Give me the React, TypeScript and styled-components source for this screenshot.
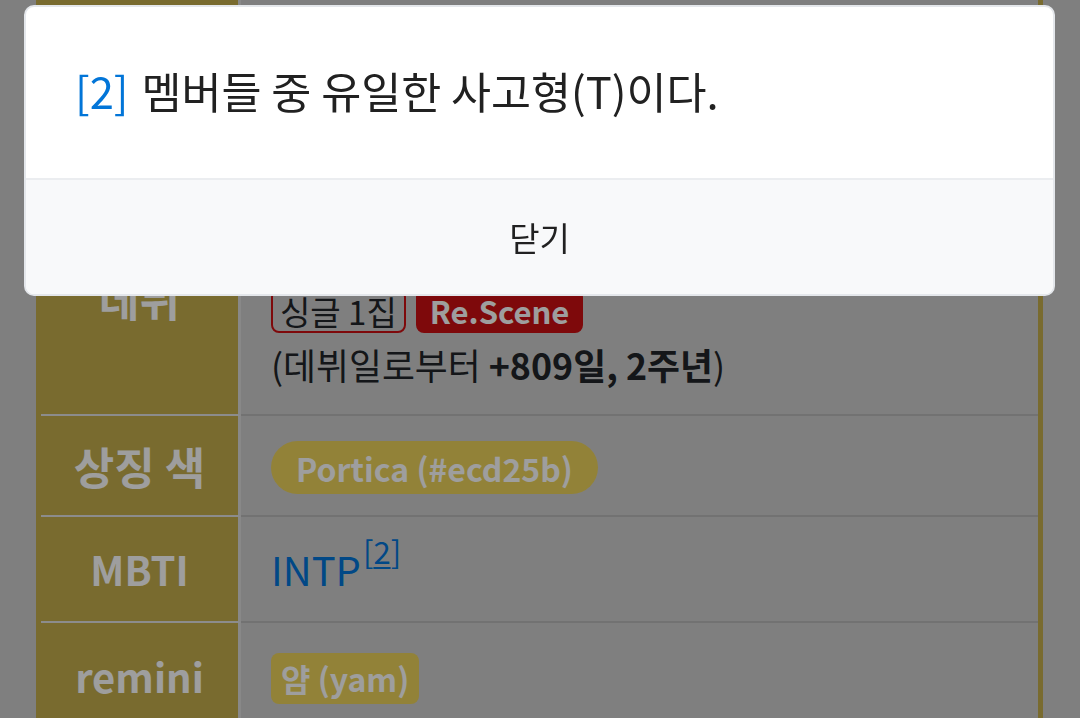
import React from "react";
import styled, { createGlobalStyle } from "styled-components";

const GOLD = "#c3ad4c";
const SYMBOL = "#ecd25b";
const RED = "#cb1013";
const LINK = "#0275d8";
const INK = "#212529";

const GlobalStyle = createGlobalStyle`
  html, body { margin: 0; padding: 0; }
  body {
    background: #cecece;
    font-family: "Noto Sans CJK KR", "Noto Sans", sans-serif;
    color: ${INK};
    overflow: hidden;
  }
`;

const Page = styled.main`
  height: 718px;
  overflow: hidden;
  padding-left: 36px;
`;

const InfoTable = styled.div`
  width: 1007px;
  box-sizing: border-box;
  border: 5px solid ${GOLD};
  border-top: 0;
`;

const Row = styled.div<{ $height: number }>`
  display: grid;
  grid-template-columns: 200px 1fr;
  height: ${(p) => p.$height}px;
`;

const Label = styled.div<{ $latin?: boolean }>`
  background: ${GOLD};
  border-bottom: 2px solid #e2e2e2;
  border-right: 3px solid #dcdcdc;
  display: flex;
  align-items: center;
  justify-content: center;
  color: #ffffff;
  font-size: ${(p) => (p.$latin ? 40 : 44)}px;
  font-weight: 700;
`;

const Cell = styled.div`
  border-bottom: 2px solid #b9b9b9;
  padding: 0 30px;
  display: flex;
  flex-direction: column;
  justify-content: center;
  align-items: flex-start;
  font-size: 35.8px;
  line-height: 46px;
`;

const TagLine = styled.div`
  display: flex;
  gap: 10px;
  margin: 34px 0 8px;
`;

const Tag = styled.span<{ $solid?: boolean }>`
  display: inline-flex;
  align-items: center;
  height: 44px;
  box-sizing: border-box;
  padding: 0 ${(p) => (p.$solid ? 12 : 7)}px;
  border-radius: 8px;
  border: 2px solid ${RED};
  background: ${(p) => (p.$solid ? RED : "transparent")};
  color: ${(p) => (p.$solid ? "#ffffff" : INK)};
  font-weight: ${(p) => (p.$solid ? 700 : 400)};
  font-size: ${(p) => (p.$solid ? 31 : 33)}px;
`;

const Strong = styled.b`
  font-weight: 700;
`;

const ColorPill = styled.span<{ $round?: boolean }>`
  display: inline-flex;
  align-items: center;
  background: ${SYMBOL};
  color: #ffffff;
  font-weight: 700;
  font-size: 32px;
  height: ${(p) => (p.$round ? 53 : 51)}px;
  padding: 0 ${(p) => (p.$round ? 25 : 10)}px;
  border-radius: ${(p) => (p.$round ? "27px" : "8px")};
  margin-top: 4px;
`;

const Link = styled.span`
  color: ${LINK};
  font-size: 40px;
  line-height: 50px;
`;

const Ref = styled.sup`
  color: ${LINK};
  font-size: 31px;
  line-height: 0;
  vertical-align: 22px;
  margin-left: 2px;

  u {
    text-decoration-thickness: 2px;
    text-underline-offset: 3px;
  }
`;

const Backdrop = styled.div`
  position: fixed;
  inset: 0;
  background: rgba(0, 0, 0, 0.38);
  z-index: 10;
`;

const Dialog = styled.div`
  position: fixed;
  top: 5px;
  left: 24px;
  width: 1031px;
  box-sizing: border-box;
  background: #ffffff;
  border: 2px solid #e4e7eb;
  border-radius: 10px;
  overflow: hidden;
  z-index: 11;
`;

const DialogBody = styled.div`
  height: 171px;
  box-sizing: border-box;
  padding: 0 0 5px 49px;
  display: flex;
  align-items: center;
  font-size: 43.5px;
  color: #212121;
`;

const Note = styled.span`
  color: ${LINK};
  margin-right: 13px;
`;

const DialogFooter = styled.div`
  height: 116px;
  box-sizing: border-box;
  border-top: 2px solid #ebedf0;
  background: #f8f9fa;
  display: flex;
  align-items: center;
  justify-content: center;
  font-size: 33px;
  color: #212121;
`;

export default function App() {
  return (
    <>
      <GlobalStyle />
      <Page>
        <InfoTable>
          {/* row scrolled mostly out of view, under the dialog */}
          <Row $height={182}>
            <Label />
            <Cell />
          </Row>
          <Row $height={234}>
            <Label>데뷔</Label>
            <Cell>
              <div>2024년 3월 4일</div>
              <TagLine>
                <Tag>싱글 1집</Tag>
                <Tag $solid>Re.Scene</Tag>
              </TagLine>
              <div>
                (데뷔일로부터 <Strong>+809일, 2주년</Strong>)
              </div>
            </Cell>
          </Row>
          <Row $height={101}>
            <Label>상징 색</Label>
            <Cell>
              <ColorPill $round>Portica (#ecd25b)</ColorPill>
            </Cell>
          </Row>
          <Row $height={106}>
            <Label $latin>MBTI</Label>
            <Cell>
              <div>
                <Link>INTP</Link>
                <Ref>
                  [<u>2</u>]
                </Ref>
              </div>
            </Cell>
          </Row>
          <Row $height={108}>
            <Label $latin>remini</Label>
            <Cell>
              <ColorPill>얌 (yam)</ColorPill>
            </Cell>
          </Row>
        </InfoTable>
      </Page>
      <Backdrop />
      <Dialog role="dialog">
        <DialogBody>
          <Note>[2]</Note>멤버들 중 유일한 사고형(T)이다.
        </DialogBody>
        <DialogFooter>닫기</DialogFooter>
      </Dialog>
    </>
  );
}
